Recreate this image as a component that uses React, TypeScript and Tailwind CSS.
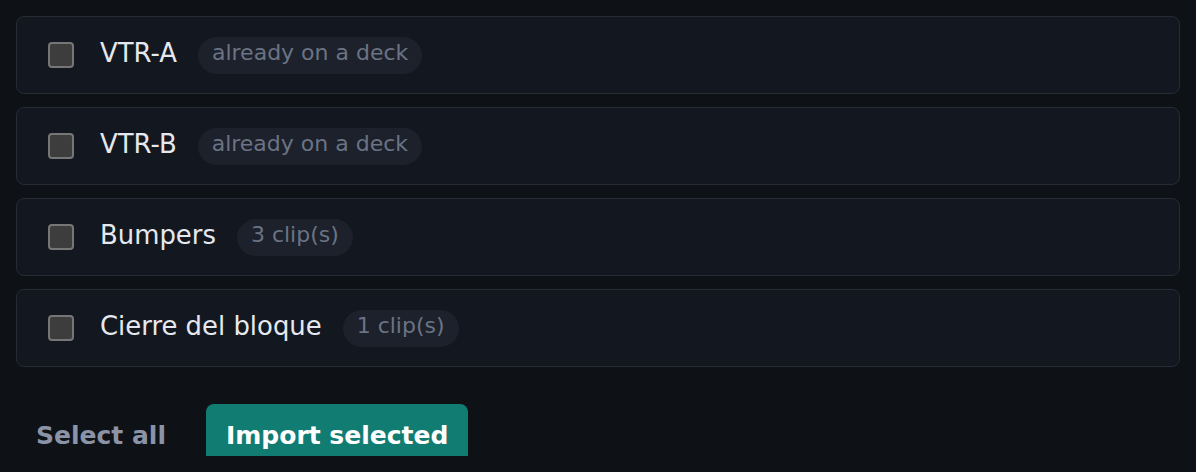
import React from "react";

const items = [
  { name: "VTR-A", badge: "already on a deck" },
  { name: "VTR-B", badge: "already on a deck" },
  { name: "Bumpers", badge: "3 clip(s)" },
  { name: "Cierre del bloque", badge: "1 clip(s)" },
];

export default function App() {
  return (
    <div
      className="w-[1196px] h-[472px] bg-[#0e1116] px-4 pt-4 pb-4"
      style={{ fontFamily: '"DejaVu Sans", Verdana, sans-serif' }}
    >
      <div className="h-[440px] overflow-hidden flex flex-col">
        <div className="flex flex-col gap-[13px]">
          {items.map((it) => (
            <div
              key={it.name}
              className="h-[78px] rounded-[8px] border border-[#262b34] bg-[#131720] flex items-center pl-[31px]"
            >
              <span className="w-[26px] h-[26px] rounded-[4px] border-2 border-[#767676] bg-[#3d3d3d] shrink-0" />
              <span className="ml-[26px] text-[25.9px] leading-none text-[#e5e8ee] pb-[3px]">{it.name}</span>
              <span className="ml-[21px] h-[37px] px-[14px] pb-[4px] rounded-full bg-[#1c212b] text-[22px] text-[#6b7384] flex items-center leading-none">
                {it.badge}
              </span>
            </div>
          ))}
        </div>
        <div className="mt-[37px] flex items-start gap-[20px] shrink-0">
          <button className="h-[61px] px-[20px] pt-[1px] text-[25px] font-bold text-[#8b93a7] leading-none">
            Select all
          </button>
          <button className="h-[61px] px-[20px] pt-[1px] rounded-[8px] bg-[#117c72] text-[25px] font-bold text-white leading-none">
            Import selected
          </button>
        </div>
      </div>
    </div>
  );
}
